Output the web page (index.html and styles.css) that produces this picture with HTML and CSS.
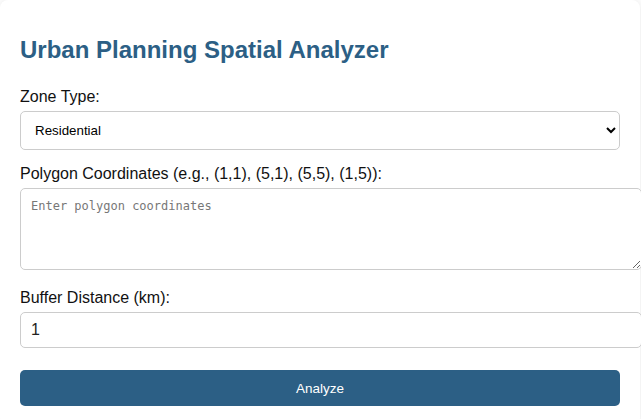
FILE: index.html
```html
<!DOCTYPE html>
<html lang="en">
<head>
<meta charset="utf-8">
<title>Urban Planning Spatial Analyzer</title>
<link rel="stylesheet" href="styles.css">
</head>
<body>
<div class="container">
  <h1 class="title">Urban Planning Spatial Analyzer</h1>
  <div class="form-group">
    <label class="label" for="zoneType">Zone Type:</label>
    <select class="select" id="zoneType">
      <option>Residential</option>
      <option>Commercial</option>
      <option>Industrial</option>
    </select>
  </div>
  <div class="form-group">
    <label class="label" for="coords">Polygon Coordinates (e.g., (1,1), (5,1), (5,5), (1,5)):</label>
    <textarea class="textarea" id="coords" placeholder="Enter polygon coordinates"></textarea>
  </div>
  <div class="form-group">
    <label class="label" for="buffer">Buffer Distance (km):</label>
    <input class="input" id="buffer" type="number" value="1">
  </div>
  <button class="button" type="button">Analyze</button>
</div>
</body>
</html>
```
FILE: styles.css
```css
body {
  margin: 0;
  background: #ffffff;
  font-family: "Liberation Sans", Arial, sans-serif;
  color: #111;
}
.container {
  width: 600px;
  padding: 20px;
  background: #fff;
  border-radius: 8px;
  box-shadow: 0 0 10px rgba(0, 0, 0, 0.1);
}
.title {
  color: #2c5f85;
  font-size: 24px;
  margin: 16px 0 24px;
}
.form-group {
  margin-bottom: 15px;
}
.label {
  display: block;
  margin-bottom: 5px;
  font-size: 16px;
}
.select,
.textarea,
.input {
  width: 100%;
  padding: 10px;
  border: 1px solid #ccc;
  border-radius: 5px;
  font-family: "Liberation Sans", Arial, sans-serif;
}
.select {
  color: #000;
  background: #fff;
}
.textarea {
  height: 60px;
  font-family: "DejaVu Sans Mono", monospace;
  font-size: 12px;
}
.textarea::placeholder {
  color: #777;
}
.input {
  font-size: 16px;
  height: 14px;
  color: #222;
}
.button {
  width: 100%;
  margin-top: 7px;
  padding: 10px;
  background: #2c5f85;
  color: #fff;
  border: none;
  border-radius: 5px;
  font-family: "Liberation Sans", Arial, sans-serif;
  font-size: 13.5px;
  height: 36px;
}
```
